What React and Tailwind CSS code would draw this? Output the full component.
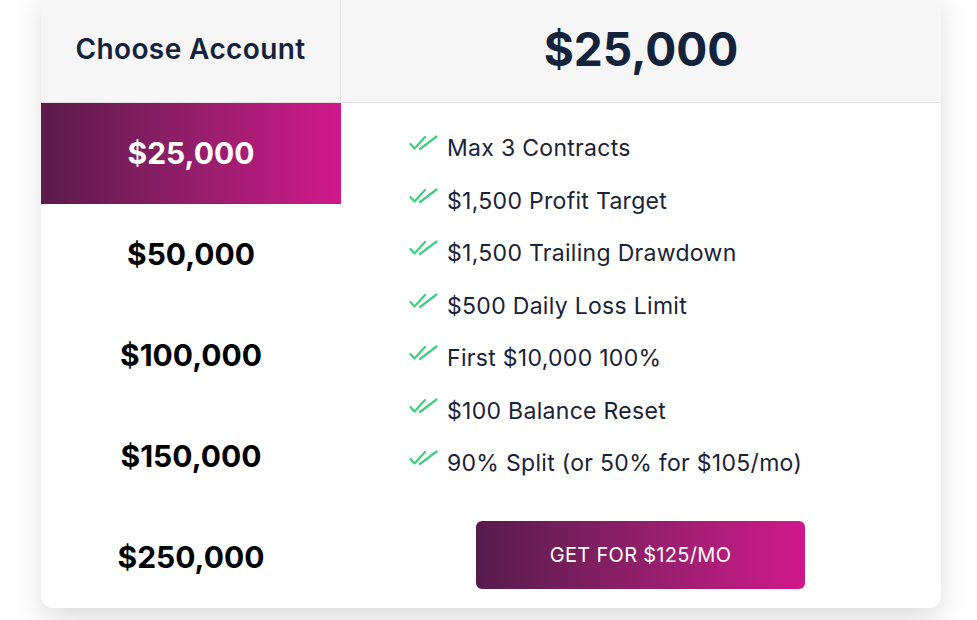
import React, { useState } from "react";

const accounts = [
  { label: "$25,000", price: "$125/MO" },
  { label: "$50,000", price: "$165/MO" },
  { label: "$100,000", price: "$255/MO" },
  { label: "$150,000", price: "$325/MO" },
  { label: "$250,000", price: "$525/MO" },
];

const features = [
  "Max 3 Contracts",
  "$1,500 Profit Target",
  "$1,500 Trailing Drawdown",
  "$500 Daily Loss Limit",
  "First $10,000 100%",
  "$100 Balance Reset",
  "90% Split (or 50% for $105/mo)",
];

function DoubleCheck() {
  return (
    <svg width="30" height="16" viewBox="0 0 30 16" fill="none" className="shrink-0 mt-[-10px]">
      <path d="M1.5 9 L5.5 13.5 L16 2" stroke="#3ecf7f" strokeWidth="2.2" strokeLinecap="round" strokeLinejoin="round" />
      <path d="M11 14 L27.5 1.5" stroke="#3ecf7f" strokeWidth="2.2" strokeLinecap="round" />
    </svg>
  );
}

export default function App() {
  const [active, setActive] = useState(0);
  const font = { fontFamily: "Inter, 'Noto Sans', sans-serif" };

  return (
    <div className="min-h-screen bg-white overflow-hidden" style={font}>
      <div className="ml-[41px] w-[900px] -mt-[14px] bg-white rounded-xl shadow-[0_12px_28px_rgba(0,0,0,0.13)] overflow-hidden">
        <div className="flex h-[117px] bg-[#f6f6f6] border-b border-[#e2e2e2]">
          <div className="w-[300px] flex items-center justify-center pt-[10px] border-r border-[#e2e2e2]">
            <h2 className="text-[28px] font-semibold text-[#14233c] tracking-[0.4px]">Choose Account</h2>
          </div>
          <div className="flex-1 flex items-center justify-center pt-[10px]">
            <h1 className="text-[46px] font-bold text-[#14233c]">{accounts[active].label}</h1>
          </div>
        </div>
        <div className="flex">
          <div className="w-[300px] flex flex-col">
            {accounts.map((a, i) => (
              <button
                key={a.label}
                onClick={() => setActive(i)}
                className={
                  i === active
                    ? "h-[101px] flex items-center justify-center text-[30px] font-bold text-white bg-gradient-to-r from-[#5a1a4a] to-[#d0188a]"
                    : "h-[101px] flex items-center justify-center text-[30px] font-bold text-black"
                }
              >
                {a.label}
              </button>
            ))}
          </div>
          <div className="flex-1 flex flex-col pl-[68px] pt-[19px]">
            <ul className="flex flex-col">
              {features.map((f) => (
                <li key={f} className="flex items-center gap-[8px] h-[52.5px] text-[23px] tracking-[0.3px] text-[#1a2238]">
                  <DoubleCheck />
                  <span>{f}</span>
                </li>
              ))}
            </ul>
            <button className="mt-[31px] ml-[67px] w-[329px] h-[68px] rounded-md bg-gradient-to-r from-[#561b4b] to-[#d0188a] text-white text-[20px] tracking-[0.3px] uppercase">
              Get for {accounts[active].price}
            </button>
          </div>
        </div>
      </div>
    </div>
  );
}
